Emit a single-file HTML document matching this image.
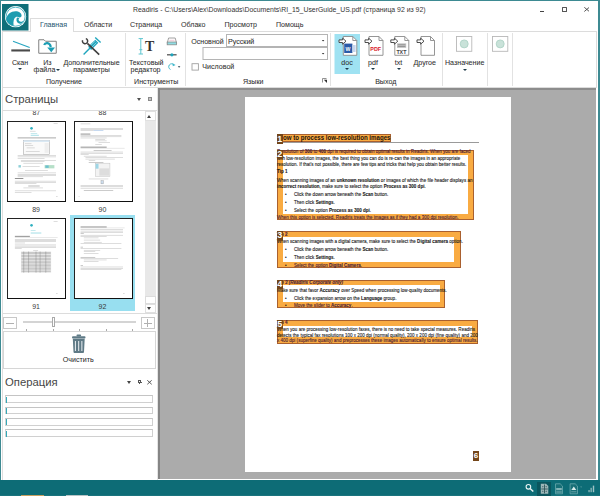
<!DOCTYPE html>
<html><head><meta charset="utf-8">
<style>
*{margin:0;padding:0;box-sizing:border-box}
html,body{width:600px;height:496px;overflow:hidden;background:#fff;font-family:"Liberation Sans",sans-serif;color:#333}
.a{position:absolute}
.t{position:absolute;white-space:nowrap;line-height:1}
.ui{font-size:7.1px;color:#2e2e2e;-webkit-text-stroke:0.05px #2e2e2e}
.tab{font-size:7.1px;color:#333;-webkit-text-stroke:0.05px #333}
.sep{position:absolute;width:1px;background:#e2e2e2}
.dd{position:absolute;width:0;height:0;border-left:2px solid transparent;border-right:2px solid transparent;border-top:2px solid #1e3a4a}
</style></head><body>
<!-- window frame -->
<div class="a" style="left:0;top:0;width:600px;height:1px;background:#3d8a92"></div>
<div class="a" style="left:0;top:0;width:1px;height:496px;background:#3d8a92"></div>
<div class="a" style="left:598.2px;top:0;width:1.8px;height:496px;background:#3d8a92"></div>

<!-- logo -->
<svg class="a" style="left:2px;top:4px" width="26.5" height="26.5" viewBox="0 0 26.5 26.5">
<rect width="26.5" height="26.5" fill="#0f6f79"/>
<circle cx="13.6" cy="12.7" r="10.6" fill="#fff"/>
<circle cx="13.6" cy="12.7" r="9.5" fill="none" stroke="#2aa5b8" stroke-width="0.8"/>
<path d="M4.2 15.5 C5 10 9 7.3 13.5 7.3 C17 7.3 19.6 9.3 19.6 11.5 C19.6 13 18 13.8 17 13.2 C16 12.6 15 12.5 14 13 C12 14 11 17 11.6 21.8 C8 21.2 4.8 19 4.2 15.5 Z" fill="#1e9cb0"/>
<path d="M15 13.4 C14 15.2 14.3 18 16.5 19.3 C18.5 20.3 21 19 22 16 C20.8 18 18.3 18.4 17.2 17 C16.2 15.8 16.6 14.4 17.6 13.9 Z" fill="#1e9cb0"/>
</svg>

<!-- title -->
<div class="t" style="left:133px;top:7.2px;font-size:6.9px;color:#333">Readiris - C:\Users\Alex\Downloads\Documents\RI_15_UserGuide_US.pdf (страница 92 из 92)</div>
<!-- window controls -->
<div class="a" style="left:540px;top:10.5px;width:4px;height:1.2px;background:#444"></div>
<div class="a" style="left:561.5px;top:7.2px;width:5.6px;height:5px;border:1px solid #555;border-radius:0.5px"></div>
<svg class="a" style="left:583.5px;top:7.3px" width="5.6" height="4.8" viewBox="0 0 5.6 4.8"><path d="M0.3 0.3L5.3 4.5M5.3 0.3L0.3 4.5" stroke="#444" stroke-width="0.9"/></svg>
<!-- tabs -->
<div class="a" style="left:2px;top:31px;width:595px;height:1px;background:#dcdcdc"></div>
<div class="a" style="left:30px;top:18px;width:44px;height:14px;border:1px solid #dcdcdc;border-bottom:none;background:#fff"></div>
<div class="t tab" style="left:40px;top:22px;color:#2b5d78">Главная</div>
<div class="t tab" style="left:84px;top:22px">Области</div>
<div class="t tab" style="left:130px;top:22px">Страница</div>
<div class="t tab" style="left:181px;top:22px">Облако</div>
<div class="t tab" style="left:224.5px;top:22px">Просмотр</div>
<div class="t tab" style="left:276px;top:22px">Помощь</div>

<!-- ribbon frame -->
<div class="a" style="left:2px;top:31px;width:1px;height:57px;background:#dcdcdc"></div>
<div class="a" style="left:596px;top:31px;width:1px;height:57px;background:#dcdcdc"></div>
<div class="a" style="left:2px;top:87px;width:595px;height:1px;background:#dcdcdc"></div>
<div class="sep" style="left:125px;top:33px;height:53px"></div>
<div class="sep" style="left:185px;top:33px;height:53px"></div>
<div class="sep" style="left:330px;top:33px;height:53px"></div>
<div class="sep" style="left:442px;top:33px;height:53px"></div>
<div class="sep" style="left:487px;top:33px;height:53px"></div>
<div class="sep" style="left:512px;top:33px;height:53px"></div>

<!-- RIBBON CONTENT -->
<div id="ribbon">
<svg class="a" style="left:0;top:0" width="600" height="90" viewBox="0 0 600 90">
<line x1="13" y1="41.2" x2="29.7" y2="47.6" stroke="#27a5c0" stroke-width="1.1"/><rect x="11.3" y="49.4" width="18.7" height="2.1" fill="#4a4a4a"/>
<path d="M38.75 39.75 H44 L45.5 41.25 H56.25 V53.25 H38.75 Z" fill="#fff" stroke="#808080" stroke-width="1"/><path d="M44.2 45 C45 42.5 49.8 41.8 50.8 47" fill="none" stroke="#1b9db3" stroke-width="2.2"/><polygon points="47.2,47.6 55,47.6 51.3,52.3" fill="#1b9db3"/>
<line x1="83.6" y1="54.4" x2="90.8" y2="47.2" stroke="#1ea5bd" stroke-width="1.4"/><line x1="89.6" y1="48.4" x2="96.8" y2="41.2" stroke="#1ea5bd" stroke-width="4.4"/><line x1="95.2" y1="37.6" x2="100.6" y2="42.6" stroke="#1ea5bd" stroke-width="1.4"/><line x1="90.6" y1="45.6" x2="95" y2="41.2" stroke="#fff" stroke-width="0.45"/><line x1="92" y1="47" x2="96.4" y2="42.6" stroke="#fff" stroke-width="0.45"/><line x1="87.4" y1="43.4" x2="99.2" y2="54.6" stroke="#404040" stroke-width="1.6"/><path d="M82.6 40.2 A2.6 2.6 0 1 0 85.8 38.6" fill="none" stroke="#404040" stroke-width="1.5"/>
<g stroke="#5ec6d0" stroke-width="1"><line x1="140.8" y1="38.6" x2="140.8" y2="54"/><line x1="138.6" y1="38.6" x2="143" y2="38.6"/><line x1="138.6" y1="54" x2="143" y2="54"/><line x1="139.3" y1="49.7" x2="142.3" y2="49.7"/></g><text x="144.9" y="50.9" font-family="Liberation Serif" font-weight="bold" font-size="14" fill="#333">T</text>
<path d="M167.2 43.2 L168.6 38 H175.2 L176.6 43.2 Z" fill="#fff" stroke="#8a8a8a" stroke-width="0.8"/><rect x="167.2" y="42" width="9.4" height="2.8" fill="#8fdde3" stroke="#8a8a8a" stroke-width="0.8"/><line x1="169.3" y1="40.3" x2="174.5" y2="40.3" stroke="#e8a0b8" stroke-width="0.6"/>
<line x1="167" y1="54.8" x2="176.6" y2="54.8" stroke="#555" stroke-width="1.3"/><circle cx="171.9" cy="54.8" r="1.6" fill="#1ea5bd"/>
<path d="M174 64.8 A3 3 0 1 0 170.5 69.5" fill="none" stroke="#3fb8cc" stroke-width="1"/><polygon points="172.5,63.2 175.6,64.9 172.8,66.3" fill="#3fb8cc"/><polygon points="177.8,66.3 180.4,66.3 179.1,67.8" fill="#1e3a4a"/>
<rect x="226.5" y="34.5" width="101" height="12" fill="#fff" stroke="#b4b4b4" stroke-width="1"/><rect x="203" y="47.5" width="124.5" height="12" fill="#fff" stroke="#b4b4b4" stroke-width="1"/><polygon points="321.8,40 324.4,40 323.1,41.5" fill="#333"/><polygon points="321.8,53 324.4,53 323.1,54.5" fill="#333"/><rect x="192" y="63.7" width="6.4" height="6.4" fill="#fff" stroke="#a0a0a0" stroke-width="0.9"/>
<path d="M322.5 82.5 V78.5 H326.5" fill="none" stroke="#777" stroke-width="0.8"/><polygon points="323.8,79.8 327,79.8 327,83 " fill="#333"/>
<rect x="334.5" y="34" width="25.5" height="40" fill="#9fe2f2"/>
<path d="M343.3 36.5 H352.8 L356.8 40.5 V55.3 H343.3 Z" fill="#fff" stroke="#8a8a8a" stroke-width="0.9"/><path d="M352.8 36.5 V40.5 H356.8" fill="none" stroke="#8a8a8a" stroke-width="0.9"/><path d="M339 39.900000000000006 H342.6 V38.2 L346 41.2 L342.6 44.2 V42.5 H339 Z" fill="#fff" stroke="#444" stroke-width="0.95"/><rect x="344.2" y="43.6" width="8.2" height="9.4" fill="#2b5aa8"/><rect x="352.4" y="45" width="3.2" height="7" fill="#c7d6ee"/><text x="345.6" y="50.6" font-family="Liberation Sans" font-weight="bold" font-size="5.2" fill="#fff">W</text>
<path d="M369 36.5 H379 L383 40.5 V55.3 H369 Z" fill="#fff" stroke="#8a8a8a" stroke-width="0.9"/><path d="M379 36.5 V40.5 H383" fill="none" stroke="#8a8a8a" stroke-width="0.9"/><path d="M365 39.900000000000006 H368.6 V38.2 L372 41.2 L368.6 44.2 V42.5 H365 Z" fill="#fff" stroke="#444" stroke-width="0.95"/><text x="370.3" y="51" font-family="Liberation Sans" font-weight="bold" font-size="5.3" fill="#d9202a" textLength="10.8" lengthAdjust="spacingAndGlyphs">PDF</text>
<path d="M394.8 36.5 H404.8 L408.8 40.5 V55.3 H394.8 Z" fill="#fff" stroke="#8a8a8a" stroke-width="0.9"/><path d="M404.8 36.5 V40.5 H408.8" fill="none" stroke="#8a8a8a" stroke-width="0.9"/><path d="M390.8 39.900000000000006 H394.40000000000003 V38.2 L397.8 41.2 L394.40000000000003 44.2 V42.5 H390.8 Z" fill="#fff" stroke="#444" stroke-width="0.95"/><rect x="397" y="43.3" width="9.2" height="4.6" fill="#c4c4c4"/><rect x="397.8" y="44.4" width="7.6" height="0.8" fill="#8a8a8a"/><rect x="397.8" y="46.2" width="7.6" height="0.8" fill="#8a8a8a"/><text x="396.4" y="54" font-family="Liberation Sans" font-weight="bold" font-size="4.8" fill="#444" textLength="10" lengthAdjust="spacingAndGlyphs">TXT</text>
<path d="M421 36.5 H430.5 L434.5 40.5 V55.3 H421 Z" fill="#fff" stroke="#8a8a8a" stroke-width="0.9"/><path d="M430.5 36.5 V40.5 H434.5" fill="none" stroke="#8a8a8a" stroke-width="0.9"/><path d="M417 39.900000000000006 H420.6 V38.2 L424 41.2 L420.6 44.2 V42.5 H417 Z" fill="#fff" stroke="#444" stroke-width="0.95"/><rect x="456.5" y="36.5" width="15.3" height="14.8" fill="#fff" stroke="#b8b8b8" stroke-width="0.9"/><circle cx="464.2" cy="43.9" r="4" fill="#c9e2d9" stroke="#a9d1c3" stroke-width="0.8"/><rect x="492.5" y="36.5" width="15.3" height="14.8" fill="#fff" stroke="#b8b8b8" stroke-width="0.9"/><circle cx="500.2" cy="43.9" r="4" fill="#c9e2d9" stroke="#a9d1c3" stroke-width="0.8"/>
</svg>
<div class="t ui" style="left:191.2px;top:39.4px">Основной</div><div class="t ui" style="left:228px;top:39.4px">Русский</div><div class="t ui" style="left:202.3px;top:64.1px">Числовой</div>
<div class="t ui" style="left:-30px;top:59.6px;width:100px;text-align:center;">Скан</div>
<div class="dd" style="left:18px;top:68px"></div>
<div class="t ui" style="left:-2.6000000000000014px;top:59.6px;width:100px;text-align:center;">Из</div>
<div class="t ui" style="left:-5.5px;top:67.4px;width:100px;text-align:center;">файла</div>
<div class="dd" style="left:55.5px;top:68.5px"></div>
<div class="t ui" style="left:41.5px;top:59.6px;width:100px;text-align:center;">Дополнительные</div>
<div class="t ui" style="left:41.5px;top:67.4px;width:100px;text-align:center;">параметры</div>
<div class="t ui" style="left:14px;top:78.7px;width:100px;text-align:center;">Получение</div>
<div class="t ui" style="left:96.19999999999999px;top:59.6px;width:100px;text-align:center;">Текстовый</div>
<div class="t ui" style="left:95.5px;top:67.4px;width:100px;text-align:center;">редактор</div>
<div class="t ui" style="left:106.19999999999999px;top:78.7px;width:100px;text-align:center;">Инструменты</div>
<div class="t ui" style="left:203.2px;top:78.7px;width:100px;text-align:center;">Языки</div>
<div class="t ui" style="left:297px;top:59.6px;width:100px;text-align:center;">doc</div>
<div class="dd" style="left:345px;top:68px"></div>
<div class="t ui" style="left:323px;top:59.6px;width:100px;text-align:center;">pdf</div>
<div class="dd" style="left:371px;top:68px"></div>
<div class="t ui" style="left:348.5px;top:59.6px;width:100px;text-align:center;">txt</div>
<div class="dd" style="left:396.5px;top:68px"></div>
<div class="t ui" style="left:374.75px;top:59.6px;width:100px;text-align:center;">Другое</div>
<div class="t ui" style="left:335.75px;top:78.7px;width:100px;text-align:center;">Выход</div>
<div class="t ui" style="left:414.7px;top:59.6px;width:100px;text-align:center;">Назначение</div>
<div class="dd" style="left:462.5px;top:68.5px"></div>
</div>

<!-- LEFT PANEL -->
<div id="left">
<div class="a" style="left:2px;top:88px;width:1px;height:392px;background:#dedede"></div>
<div class="a" style="left:157px;top:88px;width:1px;height:392px;background:#e4e4e4"></div>
<div class="t" style="left:5px;top:94.4px;font-size:11.3px;color:#474747">Страницы</div>
<div class="a" style="left:136.8px;top:97.8px;width:0;height:0;border-left:2.9px solid transparent;border-right:2.9px solid transparent;border-top:3.4px solid #505050"></div>
<div class="a" style="left:147.9px;top:97.3px;width:4.2px;height:3.8px;background:#c4c4c4;border:0.9px solid #8a8a8a"></div>
<div class="a" style="left:3px;top:109.5px;width:154px;height:1px;background:#dcdcdc"></div>
<div class="a" style="left:3px;top:313px;width:154px;height:1px;background:#dcdcdc"></div>
<div class="a" style="left:3px;top:110.5px;width:142px;height:202.5px;overflow:hidden">
<div class="a" style="left:66.7px;top:104.8px;width:65.3px;height:95.7px;background:#98dff0"></div>
<div class="t" style="left:13.299999999999997px;top:-1.8px;width:40px;text-align:center;font-size:7px;color:#3a3a3a">87</div>
<div class="t" style="left:79.5px;top:-1.8px;width:40px;text-align:center;font-size:7px;color:#3a3a3a">88</div>
<div class="t" style="left:13.100000000000001px;top:95.1px;width:40px;text-align:center;font-size:7px;color:#3a3a3a">89</div>
<div class="t" style="left:79.5px;top:95.1px;width:40px;text-align:center;font-size:7px;color:#3a3a3a">90</div>
<div class="t" style="left:13.100000000000001px;top:192.1px;width:40px;text-align:center;font-size:7px;color:#3a3a3a">91</div>
<div class="t" style="left:79.5px;top:192.1px;width:40px;text-align:center;font-size:7px;color:#3a3a3a">92</div>
<!--T87--><div class="a" style="left:4px;top:10.5px;width:59px;height:81px;background:#fff;border-left:1.3px solid #222;border-top:1.3px solid #222;border-right:1.7px solid #111;border-bottom:1.7px solid #111;overflow:hidden"><svg width="59" height="81" viewBox="0 0 361 496" style="position:absolute;left:-1.3px;top:-1.3px"><rect x="285" y="13.8" width="25" height="2.4" fill="#a8a8a8"/><circle cx="150" cy="45" r="8" fill="#2fb0c0"/><rect x="140" y="60.8" width="35" height="2.4" fill="#a8a8a8"/><rect x="145" y="73.8" width="40" height="2.4" fill="#6cc8d2"/><rect x="145" y="84" width="50" height="8" fill="#b9e6ec"/><rect x="65" y="98.8" width="235" height="2.4" fill="#7a7a7a"/><rect x="65" y="106.8" width="235" height="2.4" fill="#a8a8a8"/><rect x="100" y="118" width="160" height="87" fill="#fafafa" stroke="#9a9a9a" stroke-width="3"/><rect x="100" y="118" width="160" height="10" fill="#d6e6f2"/><rect x="110" y="138.8" width="40" height="2.4" fill="#a8a8a8"/><rect x="110" y="148.8" width="50" height="2.4" fill="#a8a8a8"/><rect x="120" y="163.8" width="50" height="2.4" fill="#a8a8a8"/><rect x="115" y="183.8" width="85" height="2.4" fill="#a8a8a8"/><rect x="230" y="135" width="25" height="60" fill="#eee"/><rect x="65" y="210.8" width="235" height="2.4" fill="#a8a8a8"/><rect x="65" y="218.8" width="235" height="2.4" fill="#a8a8a8"/><rect x="65" y="226.8" width="165" height="2.4" fill="#a8a8a8"/><rect x="85" y="238.8" width="215" height="2.4" fill="#a8a8a8"/><rect x="85" y="246.8" width="145" height="2.4" fill="#a8a8a8"/><rect x="100" y="256.8" width="120" height="2.4" fill="#a8a8a8"/><rect x="70" y="270" width="15" height="15" fill="#8fd0d8"/><rect x="95" y="276.8" width="105" height="2.4" fill="#a8a8a8"/><rect x="230" y="270" width="60" height="20" fill="#b6e0c8"/><rect x="235" y="272" width="20" height="15" fill="#6cc0d0"/><rect x="110" y="303.8" width="140" height="2.4" fill="#a8a8a8"/><rect x="65" y="316.8" width="235" height="2.4" fill="#a8a8a8"/><rect x="65" y="324.8" width="235" height="2.4" fill="#a8a8a8"/><rect x="65" y="332.8" width="235" height="2.4" fill="#a8a8a8"/><rect x="65" y="340.8" width="155" height="2.4" fill="#a8a8a8"/><rect x="48" y="349.5" width="52" height="5" fill="#7a7a7a"/><rect x="48" y="366.8" width="252" height="2.4" fill="#a8a8a8"/><rect x="48" y="374.8" width="252" height="2.4" fill="#a8a8a8"/><rect x="48" y="382.8" width="132" height="2.4" fill="#a8a8a8"/><rect x="130" y="393.8" width="70" height="2.4" fill="#a8a8a8"/><rect x="130" y="400.8" width="70" height="2.4" fill="#a8a8a8"/><rect x="100" y="408.8" width="120" height="2.4" fill="#a8a8a8"/><rect x="48" y="426.8" width="252" height="2.4" fill="#a8a8a8"/><rect x="48" y="434.8" width="102" height="2.4" fill="#a8a8a8"/><rect x="300" y="460.8" width="10" height="2.4" fill="#a8a8a8"/></svg></div>
<!--T88--><div class="a" style="left:71px;top:10.5px;width:59px;height:81px;background:#fff;border-left:1.3px solid #222;border-top:1.3px solid #222;border-right:1.7px solid #111;border-bottom:1.7px solid #111;overflow:hidden"><svg width="59" height="81" viewBox="0 0 361 496" style="position:absolute;left:-1.3px;top:-1.3px"><rect x="40" y="16.8" width="60" height="2.4" fill="#a8a8a8"/><rect x="40" y="43.8" width="260" height="2.4" fill="#a8a8a8"/><rect x="40" y="50.8" width="260" height="2.4" fill="#a8a8a8"/><rect x="40" y="58.8" width="80" height="2.4" fill="#a8a8a8"/><rect x="120" y="58.8" width="60" height="2.4" fill="#6f9fd8"/><rect x="40" y="77.5" width="60" height="5" fill="#7a7a7a"/><rect x="40" y="88.8" width="250" height="2.4" fill="#a8a8a8"/><rect x="40" y="95.8" width="250" height="2.4" fill="#a8a8a8"/><rect x="40" y="102.8" width="160" height="2.4" fill="#a8a8a8"/><rect x="130" y="110.8" width="60" height="2.4" fill="#a8a8a8"/><rect x="130" y="120.8" width="70" height="2.4" fill="#a8a8a8"/><rect x="150" y="131.8" width="70" height="2.4" fill="#a8a8a8"/><rect x="130" y="143.8" width="40" height="2.4" fill="#a8a8a8"/><rect x="40" y="157.5" width="160" height="5" fill="#7a7a7a"/><rect x="40" y="165.0" width="270" height="2" fill="#bbb"/><rect x="120" y="178.8" width="110" height="2.4" fill="#7a7a7a"/><rect x="40" y="188.8" width="260" height="2.4" fill="#a8a8a8"/><rect x="40" y="195.8" width="260" height="2.4" fill="#a8a8a8"/><rect x="40" y="203.8" width="50" height="2.4" fill="#a8a8a8"/><rect x="60" y="213.8" width="140" height="2.4" fill="#a8a8a8"/><rect x="70" y="223.8" width="230" height="2.4" fill="#a8a8a8"/><rect x="70" y="231.8" width="180" height="2.4" fill="#a8a8a8"/><rect x="90" y="240.8" width="40" height="2.4" fill="#a8a8a8"/><rect x="90" y="253.8" width="90" height="2.4" fill="#7a7a7a"/><rect x="130" y="258" width="90" height="82" fill="#f3f3f3" stroke="#aaa" stroke-width="2"/><rect x="132" y="262" width="18" height="30" fill="#9ed6e6"/><rect x="155" y="290" width="60" height="45" fill="#ddd"/><rect x="90" y="353.8" width="120" height="2.4" fill="#a8a8a8"/><rect x="165" y="365" width="15" height="20" fill="#cde" stroke="#888" stroke-width="2"/><rect x="40" y="393.8" width="260" height="2.4" fill="#a8a8a8"/><rect x="40" y="401.8" width="260" height="2.4" fill="#a8a8a8"/><rect x="40" y="409.8" width="260" height="2.4" fill="#a8a8a8"/><rect x="60" y="423.8" width="180" height="2.4" fill="#7a7a7a"/><rect x="28" y="460.8" width="6" height="2.4" fill="#a8a8a8"/></svg></div>
<!--T89--><div class="a" style="left:4px;top:107.5px;width:59px;height:81px;background:#fff;border-left:1.3px solid #222;border-top:1.3px solid #222;border-right:1.7px solid #111;border-bottom:1.7px solid #111;overflow:hidden"><svg width="59" height="81" viewBox="0 0 361 496" style="position:absolute;left:-1.3px;top:-1.3px"><rect x="285" y="20.8" width="25" height="2.4" fill="#a8a8a8"/><circle cx="150" cy="45" r="8" fill="#2fb0c0"/><rect x="145" y="73.8" width="30" height="2.4" fill="#6cc8d2"/><rect x="145" y="88" width="65" height="8" fill="#b9e6ec"/><rect x="48" y="109.5" width="92" height="5" fill="#7a7a7a"/><rect x="48" y="117.0" width="262" height="2" fill="#bbb"/><rect x="48" y="128.8" width="252" height="2.4" fill="#a8a8a8"/><rect x="48" y="135.8" width="252" height="2.4" fill="#a8a8a8"/><rect x="48" y="143.8" width="252" height="2.4" fill="#a8a8a8"/><rect x="48" y="151.8" width="62" height="2.4" fill="#a8a8a8"/><rect x="48" y="163.8" width="252" height="2.4" fill="#a8a8a8"/><rect x="48" y="170.8" width="252" height="2.4" fill="#a8a8a8"/><rect x="48" y="178.8" width="252" height="2.4" fill="#a8a8a8"/><rect x="48" y="185.8" width="42" height="2.4" fill="#a8a8a8"/><rect x="160" y="196.8" width="30" height="2.4" fill="#a8a8a8"/><rect x="85" y="205" width="185" height="130" fill="#e6e6e6"/><rect x="88" y="208.75" width="180" height="2.5" fill="#a0a0a0"/><rect x="88" y="217.75" width="180" height="2.5" fill="#a0a0a0"/><rect x="88" y="226.75" width="180" height="2.5" fill="#a0a0a0"/><rect x="88" y="235.75" width="180" height="2.5" fill="#a0a0a0"/><rect x="88" y="244.75" width="180" height="2.5" fill="#a0a0a0"/><rect x="88" y="253.75" width="180" height="2.5" fill="#a0a0a0"/><rect x="88" y="262.75" width="180" height="2.5" fill="#a0a0a0"/><rect x="88" y="271.75" width="180" height="2.5" fill="#a0a0a0"/><rect x="88" y="280.75" width="180" height="2.5" fill="#a0a0a0"/><rect x="88" y="289.75" width="180" height="2.5" fill="#a0a0a0"/><rect x="88" y="298.75" width="180" height="2.5" fill="#a0a0a0"/><rect x="88" y="307.75" width="180" height="2.5" fill="#a0a0a0"/><rect x="88" y="316.75" width="180" height="2.5" fill="#a0a0a0"/><rect x="88" y="325.75" width="180" height="2.5" fill="#a0a0a0"/><rect x="100" y="205" width="5" height="130" fill="#777" opacity="0.45"/><rect x="130" y="205" width="5" height="130" fill="#777" opacity="0.45"/><rect x="175" y="205" width="5" height="130" fill="#777" opacity="0.45"/><rect x="200" y="205" width="5" height="130" fill="#777" opacity="0.45"/><rect x="235" y="205" width="5" height="130" fill="#777" opacity="0.45"/><rect x="300" y="460.8" width="10" height="2.4" fill="#a8a8a8"/></svg></div>
<!--T90--><div class="a" style="left:71px;top:107.5px;width:59px;height:81px;background:#fff;border-left:1.3px solid #222;border-top:1.3px solid #222;border-right:1.7px solid #111;border-bottom:1.7px solid #111;overflow:hidden"><svg width="59" height="81" viewBox="0 0 361 496" style="position:absolute;left:-1.3px;top:-1.3px"><rect x="40" y="52.5" width="160" height="5" fill="#7a7a7a"/><rect x="40" y="60.0" width="270" height="2" fill="#bbb"/><rect x="40" y="70.8" width="260" height="2.4" fill="#a8a8a8"/><rect x="40" y="78.8" width="260" height="2.4" fill="#a8a8a8"/><rect x="40" y="86.8" width="260" height="2.4" fill="#a8a8a8"/><rect x="40" y="93.8" width="20" height="2.4" fill="#7a7a7a"/><rect x="40" y="103.8" width="260" height="2.4" fill="#a8a8a8"/><rect x="40" y="111.8" width="160" height="2.4" fill="#a8a8a8"/><rect x="60" y="120.8" width="90" height="2.4" fill="#a8a8a8"/><rect x="60" y="133.8" width="100" height="2.4" fill="#a8a8a8"/><rect x="60" y="146.8" width="110" height="2.4" fill="#a8a8a8"/><rect x="40" y="156.8" width="250" height="2.4" fill="#a8a8a8"/><rect x="40" y="176.8" width="15" height="2.4" fill="#7a7a7a"/><rect x="40" y="186.8" width="250" height="2.4" fill="#a8a8a8"/><rect x="60" y="195.8" width="100" height="2.4" fill="#a8a8a8"/><rect x="60" y="205.8" width="70" height="2.4" fill="#a8a8a8"/><rect x="60" y="216.8" width="90" height="2.4" fill="#a8a8a8"/><rect x="40" y="238.8" width="90" height="2.4" fill="#7a7a7a"/><rect x="40" y="246.8" width="230" height="2.4" fill="#a8a8a8"/><rect x="60" y="255.8" width="140" height="2.4" fill="#a8a8a8"/><rect x="60" y="266.8" width="90" height="2.4" fill="#a8a8a8"/><rect x="40" y="288.8" width="15" height="2.4" fill="#7a7a7a"/><rect x="40" y="298.8" width="260" height="2.4" fill="#a8a8a8"/><rect x="40" y="306.8" width="260" height="2.4" fill="#a8a8a8"/><rect x="40" y="313.8" width="250" height="2.4" fill="#a8a8a8"/><rect x="300" y="460.8" width="10" height="2.4" fill="#a8a8a8"/></svg></div>
</div>
<div class="a" style="left:145px;top:110.5px;width:10.5px;height:202.5px;background:#e8e8e8"></div>
<div class="a" style="left:145px;top:110.5px;width:10.5px;height:10px;background:#fff;border:0.6px solid #e0e0e0"></div>
<div class="a" style="left:147.3px;top:114.6px;width:0;height:0;border-left:2.9px solid transparent;border-right:2.9px solid transparent;border-bottom:3px solid #404040"></div>
<div class="a" style="left:145px;top:295.5px;width:10.5px;height:8px;background:#fff;border:0.6px solid #dcdcdc"></div>
<div class="a" style="left:145px;top:303.5px;width:10.5px;height:9.5px;background:#fff;border:0.6px solid #e0e0e0"></div>
<div class="a" style="left:147.3px;top:307.4px;width:0;height:0;border-left:2.9px solid transparent;border-right:2.9px solid transparent;border-top:3px solid #404040"></div>
<div class="a" style="left:3px;top:317px;width:13.8px;height:12.3px;border:0.8px solid #c8c8c8;background:#fff"></div>
<div class="a" style="left:6px;top:323px;width:8px;height:0.8px;background:#b0b0b0"></div>
<div class="a" style="left:141px;top:317px;width:13.8px;height:12.3px;border:0.8px solid #c8c8c8;background:#fff"></div>
<div class="a" style="left:143.8px;top:323px;width:8px;height:0.8px;background:#b0b0b0"></div>
<div class="a" style="left:147.4px;top:319.2px;width:0.8px;height:8px;background:#b0b0b0"></div>
<div class="a" style="left:23px;top:321px;width:113px;height:1.6px;background:#d4d4d4"></div>
<div class="a" style="left:26px;top:329px;width:0.8px;height:2px;background:#aaa"></div>
<div class="a" style="left:52.5px;top:329px;width:0.8px;height:2px;background:#aaa"></div>
<div class="a" style="left:79px;top:329px;width:0.8px;height:2px;background:#aaa"></div>
<div class="a" style="left:105.5px;top:329px;width:0.8px;height:2px;background:#aaa"></div>
<div class="a" style="left:132px;top:329px;width:0.8px;height:2px;background:#aaa"></div>
<div class="a" style="left:51.5px;top:317.3px;width:3.2px;height:9.6px;background:#fff;border:0.8px solid #aaa"></div>
<div class="a" style="left:3px;top:331.3px;width:152.7px;height:37.5px;border:0.8px solid #d6d6d6;background:#fff"></div>
<svg class="a" style="left:0;top:330px" width="160" height="30" viewBox="0 330 160 30"><rect x="76.5" y="334.4" width="4.6" height="2" rx="0.8" fill="#5f7a86"/><rect x="72" y="336.3" width="13.5" height="2.2" rx="1" fill="#5f7a86"/><path d="M72.8 338.8 H84.7 L84 352 Q84 353 83 353 H74.5 Q73.5 353 73.5 352 Z" fill="#5f7a86"/><rect x="74.9" y="341" width="1.1" height="10" fill="#dfe6ea"/><rect x="78.1" y="341" width="1.1" height="10" fill="#dfe6ea"/><rect x="81.3" y="341" width="1.1" height="10" fill="#dfe6ea"/></svg>
<div class="t ui" style="left:28.3px;top:356.6px;width:100px;text-align:center">Очистить</div>
<div class="t" style="left:5px;top:376.6px;font-size:11.3px;color:#474747">Операция</div>
<div class="a" style="left:126.6px;top:380.6px;width:0;height:0;border-left:2.7px solid transparent;border-right:2.7px solid transparent;border-top:3.1px solid #444"></div>
<div class="a" style="left:138.3px;top:380px;width:2.6px;height:2.6px;border:0.8px solid #555"></div><div class="a" style="left:137.5px;top:382.4px;width:4.2px;height:0.9px;background:#555"></div><div class="a" style="left:139.2px;top:383px;width:0.8px;height:1.2px;background:#555"></div>
<svg class="a" style="left:147.3px;top:380px" width="5" height="4.6" viewBox="0 0 5 4.6"><path d="M0.3 0.3L4.7 4.3M4.7 0.3L0.3 4.3" stroke="#444" stroke-width="0.9"/></svg>
<div class="a" style="left:5px;top:395.4px;width:147.5px;height:7.8px;border:0.8px solid #d0d0d0;border-top:1.2px solid #c4c4c4;background:#fff"></div>
<div class="a" style="left:5.6px;top:396.59999999999997px;width:1.2px;height:6px;background:#35a9b8"></div>
<div class="a" style="left:5px;top:406.7px;width:147.5px;height:7.8px;border:0.8px solid #d0d0d0;border-top:1.2px solid #c4c4c4;background:#fff"></div>
<div class="a" style="left:5.6px;top:407.9px;width:1.2px;height:6px;background:#35a9b8"></div>
<div class="a" style="left:5px;top:418px;width:147.5px;height:7.8px;border:0.8px solid #d0d0d0;border-top:1.2px solid #c4c4c4;background:#fff"></div>
<div class="a" style="left:5.6px;top:419.2px;width:1.2px;height:6px;background:#35a9b8"></div>
<div class="a" style="left:5px;top:429.3px;width:147.5px;height:7.8px;border:0.8px solid #d0d0d0;border-top:1.2px solid #c4c4c4;background:#fff"></div>
<div class="a" style="left:5.6px;top:430.5px;width:1.2px;height:6px;background:#35a9b8"></div>
</div>

<!-- DOC AREA -->
<div class="a" style="left:158px;top:88px;width:438.3px;height:391px;background:#ababab"></div>
<div class="a" style="left:158px;top:88px;width:438.3px;height:2px;background:#8d8d8d"></div>
<div class="a" style="left:158px;top:88px;width:1.6px;height:391px;background:#858585"></div>
<div class="a" style="left:245px;top:97px;width:266px;height:375px;background:#fff"></div>
<!--PAGE-->
<div class="a" style="left:277px;top:141.5px;width:202px;height:1px;background:#9a9a9a"></div>
<div class="a" style="left:277px;top:134px;width:114.19999999999999px;height:8px;background:#f9ab42;border:1px solid #a9602f"></div>
<div class="t" style="left:283px;top:134.3px;font-size:7.7px;font-weight:bold;color:#1e120a;transform:scaleX(0.796);transform-origin:0 0">ow to process low-resolution images</div>
<div class="a" style="left:277px;top:134px;width:5.6px;height:10px;background:#74461a;color:#fff;font-family:'Liberation Sans';font-weight:bold;font-size:9px;line-height:10px;text-align:center;overflow:hidden">1</div>
<div class="a" style="left:277px;top:149.6px;width:197px;height:70.4px;background:#f9ab42;border:1px solid #a9602f"></div>
<div class="a" style="left:283px;top:154.5px;width:184.5px;height:59.0px;background:#fff"></div>
<div class="t" style="left:277px;top:149.40px;font-size:5.6px;color:#4a2038;-webkit-text-stroke:0.12px #4a2038;transform:scaleX(0.809);transform-origin:0 0;">Resolution of <b>300</b> to <b>400</b> dpi is required to obtain optimal results in Readiris. When you are faced</div>
<div class="t" style="left:277px;top:155.60px;font-size:5.6px;color:#1a1a1a;-webkit-text-stroke:0.12px #1a1a1a;transform:scaleX(0.809);transform-origin:0 0;">with low-resolution images, the best thing you can do is re-can the images in an appropriate</div>
<div class="t" style="left:277px;top:161.80px;font-size:5.6px;color:#1a1a1a;-webkit-text-stroke:0.12px #1a1a1a;transform:scaleX(0.809);transform-origin:0 0;">resolution. If that's not possible, there are few tips and tricks that help you obtain better results.</div>
<div class="t" style="left:277px;top:169.30px;font-size:5.6px;color:#1a1a1a;-webkit-text-stroke:0.12px #1a1a1a;transform:scaleX(0.809);transform-origin:0 0;"><b>Tip 1</b></div>
<div class="t" style="left:277px;top:177.90px;font-size:5.6px;color:#1a1a1a;-webkit-text-stroke:0.12px #1a1a1a;transform:scaleX(0.809);transform-origin:0 0;">When scanning images of an <b>unknown resolution</b> or images of which the file header displays an</div>
<div class="t" style="left:277px;top:183.60px;font-size:5.6px;color:#1a1a1a;-webkit-text-stroke:0.12px #1a1a1a;transform:scaleX(0.809);transform-origin:0 0;"><b>incorrect resolution</b>, make sure to select the option <b>Process as 300 dpi</b>.</div>
<div class="t" style="left:285.2px;top:191.70px;font-size:5.6px;color:#111;-webkit-text-stroke:0.12px #111;transform:scaleX(0.809);transform-origin:0 0;">•</div>
<div class="t" style="left:293.6px;top:191.70px;font-size:5.6px;color:#1a1a1a;-webkit-text-stroke:0.12px #1a1a1a;transform:scaleX(0.809);transform-origin:0 0;">Click the down arrow beneath the <b>Scan</b> button.</div>
<div class="t" style="left:285.2px;top:199.70px;font-size:5.6px;color:#111;-webkit-text-stroke:0.12px #111;transform:scaleX(0.809);transform-origin:0 0;">•</div>
<div class="t" style="left:293.6px;top:199.70px;font-size:5.6px;color:#1a1a1a;-webkit-text-stroke:0.12px #1a1a1a;transform:scaleX(0.809);transform-origin:0 0;">Then click <b>Settings</b>.</div>
<div class="t" style="left:285.2px;top:207.80px;font-size:5.6px;color:#111;-webkit-text-stroke:0.12px #111;transform:scaleX(0.809);transform-origin:0 0;">•</div>
<div class="t" style="left:293.6px;top:207.80px;font-size:5.6px;color:#1a1a1a;-webkit-text-stroke:0.12px #1a1a1a;transform:scaleX(0.809);transform-origin:0 0;">Select the option <b>Process as 300 dpi</b>.</div>
<div class="t" style="left:277px;top:215.40px;font-size:5.6px;color:#4a2038;-webkit-text-stroke:0.12px #4a2038;transform:scaleX(0.809);transform-origin:0 0;">When this option is selected, Readiris treats the images as if they had a 300 dpi resolution.</div>
<div class="a" style="left:277px;top:149.6px;width:5.6px;height:9.5px;background:#74461a;color:#fff;font-family:'Liberation Sans';font-weight:bold;font-size:9px;line-height:9.5px;text-align:center;overflow:hidden">2</div>
<div class="a" style="left:277px;top:231.4px;width:183.5px;height:37.099999999999994px;background:#f9ab42;border:1px solid #a9602f"></div>
<div class="a" style="left:283px;top:237px;width:171px;height:25px;background:#fff"></div>
<div class="t" style="left:277px;top:232.00px;font-size:5.6px;color:#4a2038;-webkit-text-stroke:0.12px #4a2038;transform:scaleX(0.809);transform-origin:0 0;"><b>Tip 2</b></div>
<div class="t" style="left:277px;top:239.20px;font-size:5.6px;color:#1a1a1a;-webkit-text-stroke:0.12px #1a1a1a;transform:scaleX(0.809);transform-origin:0 0;">When scanning images with a digital camera, make sure to select the <b>Digital camera</b> option.</div>
<div class="t" style="left:285.2px;top:247.00px;font-size:5.6px;color:#111;-webkit-text-stroke:0.12px #111;transform:scaleX(0.809);transform-origin:0 0;">•</div>
<div class="t" style="left:293.6px;top:247.00px;font-size:5.6px;color:#1a1a1a;-webkit-text-stroke:0.12px #1a1a1a;transform:scaleX(0.809);transform-origin:0 0;">Click the down arrow beneath the <b>Scan</b> button.</div>
<div class="t" style="left:285.2px;top:255.00px;font-size:5.6px;color:#111;-webkit-text-stroke:0.12px #111;transform:scaleX(0.809);transform-origin:0 0;">•</div>
<div class="t" style="left:293.6px;top:255.00px;font-size:5.6px;color:#1a1a1a;-webkit-text-stroke:0.12px #1a1a1a;transform:scaleX(0.809);transform-origin:0 0;">Then click <b>Settings</b>.</div>
<div class="t" style="left:285.2px;top:263.00px;font-size:5.6px;color:#111;-webkit-text-stroke:0.12px #111;transform:scaleX(0.809);transform-origin:0 0;">•</div>
<div class="t" style="left:293.6px;top:263.00px;font-size:5.6px;color:#4a2038;-webkit-text-stroke:0.12px #4a2038;transform:scaleX(0.809);transform-origin:0 0;">Select the option <b>Digital Camera</b>.</div>
<div class="a" style="left:277px;top:231.4px;width:5.6px;height:9.5px;background:#74461a;color:#fff;font-family:'Liberation Sans';font-weight:bold;font-size:9px;line-height:9.5px;text-align:center;overflow:hidden">3</div>
<div class="a" style="left:277px;top:279.5px;width:167.8px;height:28.80000000000001px;background:#f9ab42;border:1px solid #a9602f"></div>
<div class="a" style="left:283px;top:285px;width:156.5px;height:16.69999999999999px;background:#fff"></div>
<div class="t" style="left:277px;top:280.30px;font-size:5.6px;color:#4a2038;-webkit-text-stroke:0.12px #4a2038;transform:scaleX(0.809);transform-origin:0 0;"><b><i>Tip 3 (Readiris Corporate only)</i></b></div>
<div class="t" style="left:277px;top:287.50px;font-size:5.6px;color:#1a1a1a;-webkit-text-stroke:0.12px #1a1a1a;transform:scaleX(0.809);transform-origin:0 0;">Make sure that favor <b>Accuracy</b> over Speed when processing low-quality documents.</div>
<div class="t" style="left:285.2px;top:295.50px;font-size:5.6px;color:#111;-webkit-text-stroke:0.12px #111;transform:scaleX(0.809);transform-origin:0 0;">•</div>
<div class="t" style="left:293.6px;top:295.50px;font-size:5.6px;color:#1a1a1a;-webkit-text-stroke:0.12px #1a1a1a;transform:scaleX(0.809);transform-origin:0 0;">Click the expansion arrow on the <b>Language</b> group.</div>
<div class="t" style="left:285.2px;top:303.00px;font-size:5.6px;color:#111;-webkit-text-stroke:0.12px #111;transform:scaleX(0.809);transform-origin:0 0;">•</div>
<div class="t" style="left:293.6px;top:303.00px;font-size:5.6px;color:#4a2038;-webkit-text-stroke:0.12px #4a2038;transform:scaleX(0.809);transform-origin:0 0;">Move the slider to <b>Accuracy</b>.</div>
<div class="a" style="left:277px;top:279.5px;width:5.6px;height:9.5px;background:#74461a;color:#fff;font-family:'Liberation Sans';font-weight:bold;font-size:9px;line-height:9.5px;text-align:center;overflow:hidden">4</div>
<div class="a" style="left:277px;top:319.6px;width:201.3px;height:24.399999999999977px;background:#f9ab42;border:1px solid #a9602f"></div>
<div class="a" style="left:283px;top:326px;width:189px;height:11.399999999999977px;background:#fff"></div>
<div class="t" style="left:277px;top:320.30px;font-size:5.6px;color:#4a2038;-webkit-text-stroke:0.12px #4a2038;transform:scaleX(0.809);transform-origin:0 0;"><b>Tip 4</b></div>
<div class="t" style="left:277px;top:327.00px;font-size:5.6px;color:#1a1a1a;-webkit-text-stroke:0.12px #1a1a1a;transform:scaleX(0.809);transform-origin:0 0;">When you are processing low-resolution faxes, there is no need to take special measures. Readiris</div>
<div class="t" style="left:277px;top:332.60px;font-size:5.6px;color:#1a1a1a;-webkit-text-stroke:0.12px #1a1a1a;transform:scaleX(0.809);transform-origin:0 0;">detects the typical fax resolutions 100 x 200 dpi (normal quality), 200 x 200 dpi (fine quality) and 200</div>
<div class="t" style="left:277px;top:338.20px;font-size:5.6px;color:#4a2038;-webkit-text-stroke:0.12px #4a2038;transform:scaleX(0.809);transform-origin:0 0;">x 400 dpi (superfine quality) and preprocesses these images automatically to ensure optimal results.</div>
<div class="a" style="left:277px;top:319.6px;width:5.6px;height:9.5px;background:#74461a;color:#fff;font-family:'Liberation Sans';font-weight:bold;font-size:9px;line-height:9.5px;text-align:center;overflow:hidden">5</div>
<div class="a" style="left:473.3px;top:451px;width:5.6px;height:10px;background:#74461a;color:#fff;font-family:'Liberation Sans';font-weight:bold;font-size:8px;line-height:10px;text-align:center;overflow:hidden">6</div>
<!--/PAGE-->

<!-- STATUS BAR -->
<div class="a" style="left:0;top:480px;width:600px;height:16px;background:#0d6c76"></div>
<div class="a" style="left:0;top:494.5px;width:600px;height:1px;background:#1a747e"></div>
<div id="status">
<div class="a" style="left:536.7px;top:481.5px;width:14.6px;height:14.5px;background:#0b565e"></div>
<svg class="a" style="left:520px;top:476px" width="80" height="20" viewBox="520 476 80 20"><circle cx="528.4" cy="486.8" r="2.3" fill="none" stroke="#e8f3f3" stroke-width="1.1"/><line x1="530.1" y1="488.5" x2="533.3" y2="491.5" stroke="#e8f3f3" stroke-width="1.5"/><path d="M540.8 483.8 H546 L548.3 486.1 V493.8 H540.8 Z" fill="#9db7b8"/><line x1="544.5" y1="484.5" x2="544.5" y2="493.3" stroke="#2f5558" stroke-width="0.9"/><line x1="541.3" y1="489" x2="547.8" y2="489" stroke="#2f5558" stroke-width="0.9"/><polygon points="542,486.3 543.6,486.3 542.8,487.6" fill="#2f5558"/><polygon points="545.4,486.3 547,486.3 546.2,487.6" fill="#2f5558"/><polygon points="542,491.8 543.6,491.8 542.8,490.5" fill="#2f5558"/><polygon points="545.4,491.8 547,491.8 546.2,490.5" fill="#2f5558"/><path d="M555.5 483.8 H560.2 L562.5 486.1 V493.8 H555.5 Z" fill="#176f77" stroke="#6aa9ad" stroke-width="0.8"/><rect x="556.2" y="488.2" width="5.6" height="1.6" fill="#9cc4c6"/><rect x="556.2" y="490.6" width="5.6" height="2.5" fill="#4f9399"/><path d="M570.1 483.8 H575.2 L577.5 486.1 V493.8 H570.1 Z" fill="#176f77" stroke="#6aa9ad" stroke-width="0.8"/><polygon points="571.3,490 573.8,486.6 576.3,490" fill="#d8ecec"/><rect x="571.2" y="491" width="5.2" height="1.4" fill="#4f9399"/><polygon points="580.2,486.6 582,486.6 581.1,487.7" fill="#5f9fa3"/><rect x="588.4" y="490" width="1.3" height="2.2" fill="#8fb9bb"/><rect x="590.5" y="487.8" width="1.3" height="4.4" fill="#8fb9bb"/><rect x="592.8" y="485.6" width="1.4" height="6.6" fill="#9fc3c5"/></svg>
<div class="a" style="left:21px;top:495px;width:23px;height:1px;background:#c9a060"></div><div class="a" style="left:66px;top:495px;width:22px;height:1px;background:#b8c4c6"></div>
</div>
</body></html>
